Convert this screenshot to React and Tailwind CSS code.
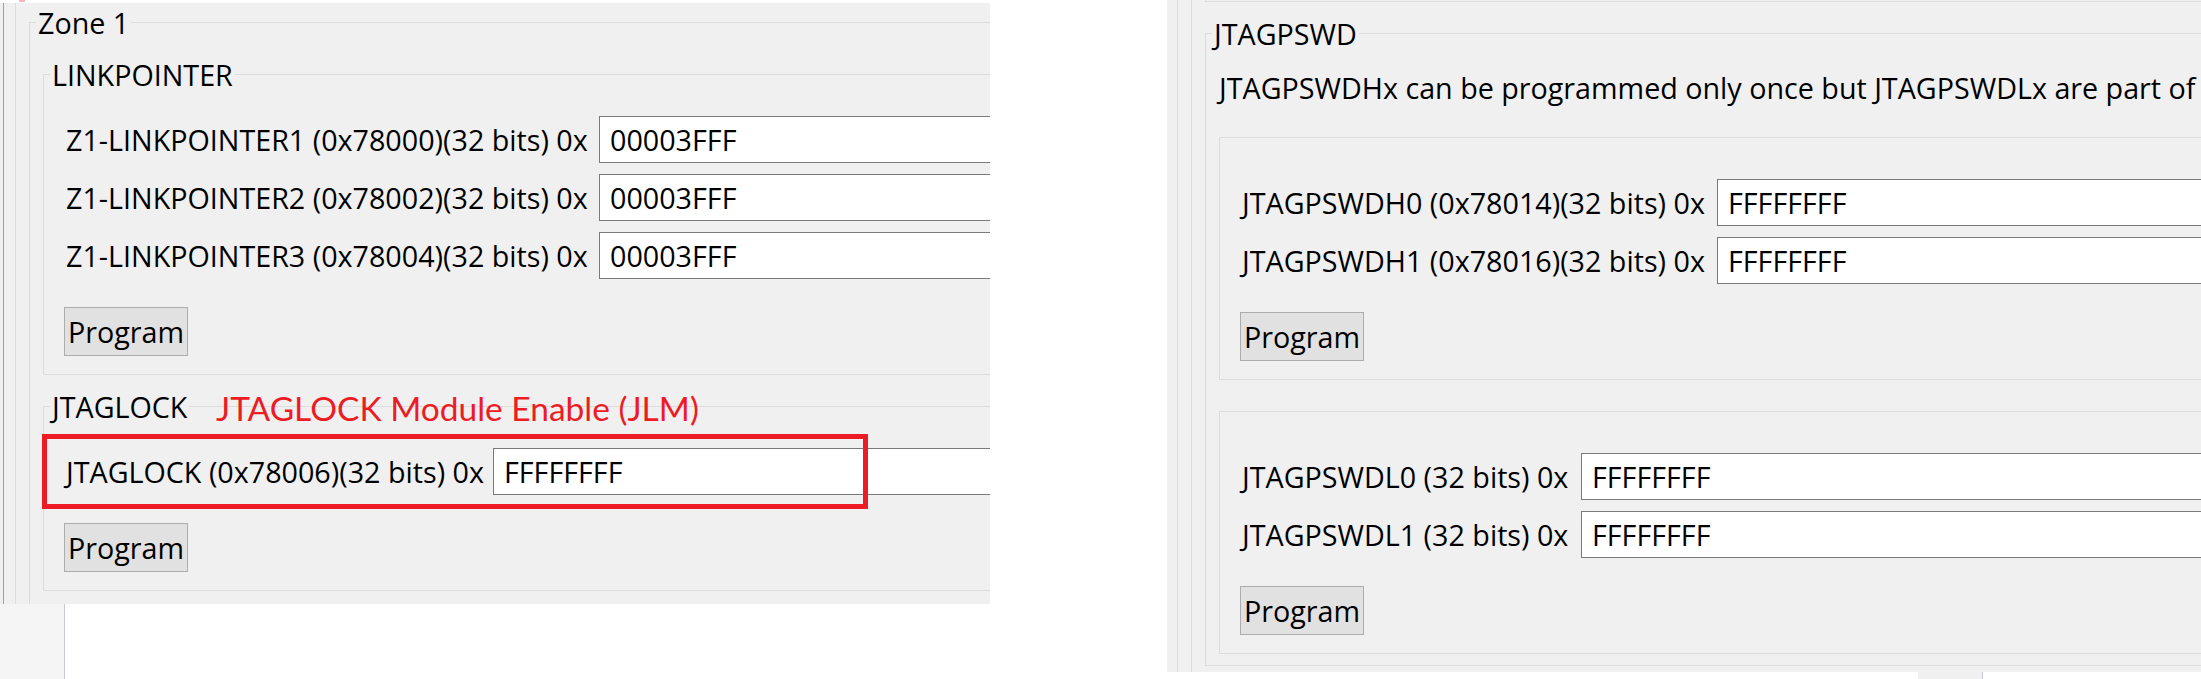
import React from "react";

// Windows-style group box: border with the caption sitting on the top edge
const GroupBox = ({ title, className = "", children }) => (
  <fieldset className={`border border-[#dcdcdc] ${className}`}>
    <legend className="ml-[6px] h-[29px] px-[2px] leading-[29px]">{title}</legend>
    {children}
  </fieldset>
);

const HexRow = ({ label, value, labelWidth }) => (
  <div className="flex items-center">
    <span className={`${labelWidth} shrink-0 whitespace-nowrap pl-[2px]`}>{label}</span>
    <div className="h-[47px] w-[720px] shrink-0 border border-[#7a7a7a] bg-white pl-[10px] leading-[45px]">
      {value}
    </div>
  </div>
);

const ProgramButton = ({ className = "" }) => (
  <button
    type="button"
    className={`h-[49px] w-[124px] border border-[#adadad] bg-[#e1e1e1] leading-[47px] ${className}`}
  >
    Program
  </button>
);

const LeftShot = () => (
  <div className="w-[990px] shrink-0">
    <div className="h-[3px] bg-white">
      <div className="ml-[19px] h-[2px] w-[6px] bg-[#f4b8b8]" />
    </div>
    <div className="relative h-[601px] overflow-hidden bg-[#f0f0f0] pl-[3px]">
      <div className="h-full border-l border-[#a0a0a0] pl-[11px]">
        <div className="h-full border-l border-[#dcdcdc] pl-[13px] pt-[5px]">
          <GroupBox title="Zone 1" className="w-[1100px] pb-[60px]">
            <div className="pl-[13px] pt-[23px]">
              <GroupBox title="LINKPOINTER" className="w-[1100px]">
                <div className="pb-[18px] pl-[20px] pt-[27px]">
                  <div className="flex flex-col gap-[11px]">
                    <HexRow label="Z1-LINKPOINTER1 (0x78000)(32 bits) 0x" value="00003FFF" labelWidth="w-[535px]" />
                    <HexRow label="Z1-LINKPOINTER2 (0x78002)(32 bits) 0x" value="00003FFF" labelWidth="w-[535px]" />
                    <HexRow label="Z1-LINKPOINTER3 (0x78004)(32 bits) 0x" value="00003FFF" labelWidth="w-[535px]" />
                  </div>
                  <ProgramButton className="mt-[28px]" />
                </div>
              </GroupBox>
              <GroupBox title="JTAGLOCK" className="mt-[17px] w-[1100px]">
                <div className="pb-[18px] pl-[20px] pt-[27px]">
                  <HexRow label="JTAGLOCK (0x78006)(32 bits) 0x" value="FFFFFFFF" labelWidth="w-[429px]" />
                  <ProgramButton className="mt-[28px]" />
                </div>
              </GroupBox>
            </div>
          </GroupBox>
        </div>
      </div>

      {/* annotation drawn on top of the screenshot */}
      <div className="absolute left-[216px] top-[388px] whitespace-nowrap font-['Lato',sans-serif] text-[33.5px] leading-[34px] text-[#ed1c24]">
        JTAGLOCK Module Enable (JLM)
      </div>
      <div className="absolute left-[42px] top-[431px] h-[75px] w-[826px] border-[5px] border-[#ed1c24]" />
    </div>
    <div className="h-[75px]">
      <div className="h-full w-[65px] border-r border-[#c8cad8] bg-[#f5f5f5]" />
    </div>
  </div>
);

const RightShot = () => (
  <div className="ml-[177px] w-[1034px] shrink-0">
    <div className="h-[672px] overflow-hidden bg-[#f0f0f0] pl-[10px]">
      <div className="h-full border-l border-[#dcdcdc] pl-[13px]">
        <div className="h-full border-l border-[#dcdcdc] pl-[13px]">
          <div className="h-[2px] w-[1100px] border-b border-l border-[#dcdcdc]" />
          <GroupBox title="JTAGPSWD" className="mt-[17px] w-[1100px]">
            <div className="pb-[11px] pl-[13px]">
              <p className="whitespace-nowrap pb-[30px] pt-[21px] leading-[38px]">
                JTAGPSWDHx can be programmed only once but JTAGPSWDLx are part of
              </p>
              <div className="w-[1100px] border border-[#dcdcdc] pb-[18px] pl-[20px] pt-[41px]">
                <div className="flex flex-col gap-[11px]">
                  <HexRow label="JTAGPSWDH0 (0x78014)(32 bits) 0x" value="FFFFFFFF" labelWidth="w-[477px]" />
                  <HexRow label="JTAGPSWDH1 (0x78016)(32 bits) 0x" value="FFFFFFFF" labelWidth="w-[477px]" />
                </div>
                <ProgramButton className="mt-[28px]" />
              </div>
              <div className="mt-[31px] w-[1100px] border border-[#dcdcdc] pb-[18px] pl-[20px] pt-[41px]">
                <div className="flex flex-col gap-[11px]">
                  <HexRow label="JTAGPSWDL0 (32 bits) 0x" value="FFFFFFFF" labelWidth="w-[341px]" />
                  <HexRow label="JTAGPSWDL1 (32 bits) 0x" value="FFFFFFFF" labelWidth="w-[341px]" />
                </div>
                <ProgramButton className="mt-[28px]" />
              </div>
            </div>
          </GroupBox>
        </div>
      </div>
    </div>
    <div className="h-[7px]">
      <div className="ml-[751px] h-full w-[65px] border-r border-[#c8cad8] bg-[#f0f0f0]" />
    </div>
  </div>
);

export default function App() {
  return (
    <div className="flex h-[679px] w-[2201px] items-start overflow-hidden bg-white font-['Open_Sans',sans-serif] text-[28.7px] text-black">
      <LeftShot />
      <RightShot />
    </div>
  );
}
